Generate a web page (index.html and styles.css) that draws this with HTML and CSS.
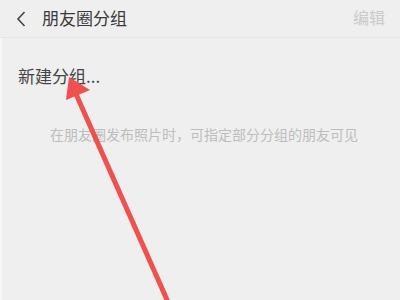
FILE: index.html
```html
<!DOCTYPE html>
<html lang="zh-CN">
<head>
<meta charset="utf-8">
<link rel="stylesheet" href="styles.css">
</head>
<body>
<div class="page">
  <header class="topbar">
    <div class="left">
      <svg class="back" width="12" height="18" viewBox="0 0 12 18"><path d="M9.5 2 L3 9 L9.5 16" fill="none" stroke="#444" stroke-width="1.6"/></svg>
      <span class="title">朋友圈分组</span>
    </div>
    <span class="edit">编辑</span>
  </header>
  <main class="content">
    <div class="new-group">新建分组...</div>
    <p class="hint">在朋友圈发布照片时，可指定部分分组的朋友可见</p>
  </main>
  <svg class="arrow" width="400" height="300" viewBox="0 0 400 300">
    <line x1="76" y1="94" x2="168" y2="302" stroke="#f0504e" stroke-width="5"/>
    <polygon points="69,77 66,100 90,90" fill="#f0504e"/>
  </svg>
</div>
</body>
</html>
```
FILE: styles.css
```css
html, body {
  margin: 0;
  padding: 0;
  background: #efefef;
}
body {
  font-family: "Noto Sans CJK SC", "Noto Sans", sans-serif;
}
.page {
  position: relative;
  width: 400px;
  height: 300px;
  overflow: hidden;
  display: flex;
  flex-direction: column;
}
.topbar {
  height: 38px;
  box-sizing: border-box;
  border-bottom: 1px solid #e6e6e6;
  display: flex;
  align-items: center;
  justify-content: space-between;
  padding: 0 15px 0 15px;
}
.left {
  display: flex;
  align-items: center;
  gap: 15px;
}
.back {
  display: block;
}
.title {
  font-size: 17px;
  color: #3a3a3a;
  line-height: 1;
  margin-top: -2px;
}
.edit {
  font-size: 16px;
  color: #cacaca;
  line-height: 1;
  margin-top: -4px;
}
.content {
  flex: 1;
  border-left: 2px solid #f7f7f7;
  padding: 28px 0 0 16px;
}
.new-group {
  font-size: 17px;
  color: #444;
  line-height: 20px;
}
.hint {
  margin: 39px 0 0 32px;
  font-size: 14px;
  color: #bdbdbd;
  line-height: 18px;
}
.arrow {
  position: absolute;
  left: 0;
  top: 0;
  pointer-events: none;
}
```
